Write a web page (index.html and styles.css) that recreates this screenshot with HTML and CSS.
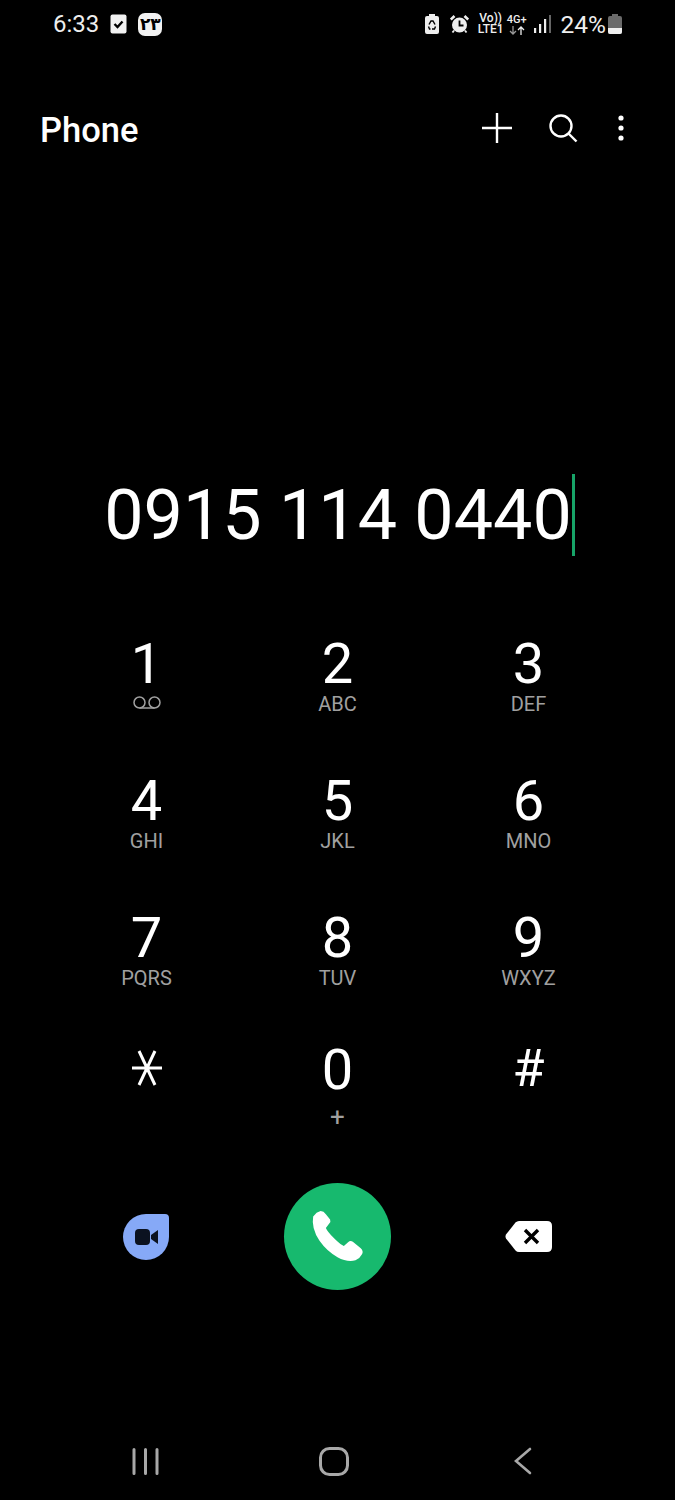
FILE: index.html
```html
<!DOCTYPE html>
<html lang="en">
<head>
  <meta charset="UTF-8" />
  <title>Phone</title>
  <link rel="stylesheet" href="styles.css">
</head>
<body>
  <div class="phone">
    <div class="status-bar">
      <div class="status-left">
        <span class="time">6:33</span>
        <svg class="icon-check" width="17" height="20" viewBox="0 0 17 20">
          <rect x="0.5" y="0.5" width="16" height="19" rx="2" fill="#f2f2f2"/>
          <path d="M4.5 10l3 3 5-5.5" fill="none" stroke="#000" stroke-width="2.4"/>
        </svg>
        <span class="date-badge">۲۳</span>
      </div>
      <div class="status-right">
        <svg width="14" height="20" viewBox="0 0 14 20">
          <path d="M4 0h6v2h2q2 0 2 2v14q0 2-2 2H2q-2 0-2-2V4q0-2 2-2h2z" fill="#eee"/>
          <path d="M4 10.500l2-3.500h2l2 3.500M10.500 12.500l-1 2.500H7M3.500 12.500l1 2.500h1" fill="none" stroke="#000" stroke-width="1.400"/>
        </svg>
        <svg class="icon-alarm" width="19" height="18" viewBox="0 0 19 18">
          <circle cx="9.500" cy="10" r="7.500" fill="#eee"/>
          <path d="M0.800 4.500L4.500 1 M14.500 1L18.200 4.500" stroke="#eee" stroke-width="2.600"/>
          <path d="M9.500 5.500V10.500H13.500" fill="none" stroke="#000" stroke-width="1.800"/>
          <path d="M4 15.500l-1.500 2M15 15.500l1.500 2" stroke="#eee" stroke-width="1.800"/>
        </svg>
        <div class="net-text volte"><span>Vo))</span><span>LTE1</span></div>
        <div class="net-text fourg">
          <span>4G+</span>
          <svg width="16" height="9" viewBox="0 0 16 9">
            <path d="M4 0v8M1 5l3 3 3-3" fill="none" stroke="#999" stroke-width="1.300"/>
            <path d="M12 9V1M9 4l3-3 3 3" fill="none" stroke="#eee" stroke-width="1.300"/>
          </svg>
        </div>
        <svg class="icon-signal" width="17" height="18" viewBox="0 0 17 18">
          <rect x="0" y="13" width="2.200" height="5" fill="#eee"/>
          <rect x="5" y="9" width="2.200" height="9" fill="#eee"/>
          <rect x="10" y="4" width="2.200" height="14" fill="#eee"/>
          <rect x="15" y="0" width="2" height="18" fill="#666"/>
        </svg>
        <span class="battery-text">24%</span>
        <svg width="14" height="20" viewBox="0 0 14 20">
          <path d="M4 0h6v2h2q2 0 2 2v14q0 2-2 2H2q-2 0-2-2V4q0-2 2-2h2z" fill="#6a6a6a"/>
          <path d="M0 14h14v4q0 2-2 2H2q-2 0-2-2z" fill="#eee"/>
        </svg>
      </div>
    </div>

    <header class="app-bar">
      <div class="app-title">Phone</div>
      <div class="app-actions">
        <svg width="32" height="32" viewBox="0 0 32 32">
          <path d="M16 1v30M1 16h30" stroke="#fff" stroke-width="2.400"/>
        </svg>
        <svg class="search-icon" width="30" height="30" viewBox="0 0 30 30">
          <circle cx="13" cy="13" r="10.500" fill="none" stroke="#fff" stroke-width="2.400"/>
          <path d="M20.500 20.500l8 8" stroke="#fff" stroke-width="2.400"/>
        </svg>
        <svg width="8" height="26" viewBox="0 0 8 26">
          <circle cx="4" cy="3" r="2.600" fill="#fff"/>
          <circle cx="4" cy="13" r="2.600" fill="#fff"/>
          <circle cx="4" cy="23" r="2.600" fill="#fff"/>
        </svg>
      </div>
    </header>

    <div class="number-display">
      <span>0915 114 0440</span><span class="caret"></span>
    </div>

    <div class="keypad">
      <div class="key"><span class="digit">1</span>
        <svg class="voicemail" width="30" height="13" viewBox="0 0 30 13">
          <circle cx="7.500" cy="6.500" r="5.500" fill="none" stroke="#a0a0a0" stroke-width="1.500"/>
          <circle cx="22.500" cy="6.500" r="5.500" fill="none" stroke="#a0a0a0" stroke-width="1.500"/>
          <path d="M7.500 12h15" stroke="#a0a0a0" stroke-width="1.500"/>
        </svg>
      </div>
      <div class="key"><span class="digit">2</span><span class="letters">ABC</span></div>
      <div class="key"><span class="digit">3</span><span class="letters">DEF</span></div>
      <div class="key"><span class="digit">4</span><span class="letters">GHI</span></div>
      <div class="key"><span class="digit">5</span><span class="letters">JKL</span></div>
      <div class="key"><span class="digit">6</span><span class="letters">MNO</span></div>
      <div class="key"><span class="digit">7</span><span class="letters">PQRS</span></div>
      <div class="key"><span class="digit">8</span><span class="letters">TUV</span></div>
      <div class="key"><span class="digit">9</span><span class="letters">WXYZ</span></div>
      <div class="key">
        <svg class="star" width="30" height="36" viewBox="0 0 30 36">
          <path d="M7 1l16 34M23 1L7 35M0 18h30" stroke="#fff" stroke-width="3"/>
        </svg>
      </div>
      <div class="key"><span class="digit">0</span><span class="letters plus">+</span></div>
      <div class="key"><span class="digit hash">#</span></div>
    </div>

    <div class="call-row">
      <svg class="video-icon" width="46" height="46" viewBox="0 0 46 46">
        <path d="M23 0H42Q46 0 46 4V23A23 23 0 1 1 23 0Z" fill="#86a9f7"/>
        <rect x="12" y="15" width="15" height="16" rx="4" fill="#0b1220"/>
        <path d="M28 21l7-5v14l-7-5z" fill="#0b1220"/>
      </svg>
      <div class="call-btn">
        <svg width="55" height="55" viewBox="-2 -2 52 52">
          <path d="M1 5Q4 1 8 0Q11 0 13 3L17 8Q18 10 16 12L13 16Q14 19 21 26Q27 32 30 33L34 29.500Q36 27.500 38.500 29L46 35Q49 38 47 41Q45 45 41 46.500Q33 48.500 24 43.500Q14 38 7 28Q-1 16 1 5Z" fill="#fff"/>
        </svg>
      </div>
      <svg width="47" height="31" viewBox="0 0 47 31">
        <path d="M14 0H42Q47 0 47 5V26Q47 31 42 31H14Q12 31 10.500 29.500L1 17.500Q0 15.500 1 13.500L10.500 1.500Q12 0 14 0Z" fill="#fff"/>
        <path d="M20 9l13 13M33 9L20 22" stroke="#000" stroke-width="3.400"/>
      </svg>
    </div>

    <nav class="nav-bar">
      <svg width="28" height="27" viewBox="0 0 28 27">
        <path d="M2 1.500v24M13.500 1.500v24M25 1.500v24" stroke="#a8a8a8" stroke-width="3" stroke-linecap="round"/>
      </svg>
      <svg class="nav-home" width="30" height="29" viewBox="0 0 30 29">
        <rect x="1.500" y="1.500" width="27" height="26" rx="9" fill="none" stroke="#a8a8a8" stroke-width="3"/>
      </svg>
      <svg width="18" height="28" viewBox="0 0 18 28">
        <path d="M16 2L2 14l14 12" fill="none" stroke="#a8a8a8" stroke-width="2.600" stroke-linecap="round"/>
      </svg>
    </nav>
  </div>
</body>
</html>
```

FILE: styles.css
```css
body {
  margin: 0;
  background-color: #000;
  font-family: Roboto, 'Noto Sans', sans-serif;
  color: #fff;
}

.phone {
  width: 675px;
  height: 1500px;
  overflow: hidden;
}

.status-bar {
  display: flex;
  justify-content: space-between;
  align-items: center;
  height: 28px;
  padding: 10px 53px 0 53px;
}
.status-left {
  display: flex;
  align-items: center;
  gap: 11px;
}
.time {
  font-size: 24px;
  color: #eee;
}
.date-badge {
  width: 24px;
  height: 23px;
  line-height: 23px;
  border-radius: 7px;
  background-color: #f2f2f2;
  color: #000;
  font-family: 'DejaVu Sans', sans-serif;
  font-size: 17px;
  font-weight: bold;
  text-align: center;
}
.status-right {
  display: flex;
  align-items: center;
  gap: 8px;
}
.icon-alarm {
  margin: 0 1px 0 3px;
}
.net-text {
  display: flex;
  flex-direction: column;
  align-items: center;
  font-size: 12px;
  line-height: 11px;
  font-weight: 500;
  color: #eee;
}
.fourg {
  font-size: 11px;
  margin: 0 -1px 0 -5px;
}
.fourg svg {
  display: block;
  margin-top: 1px;
}
.battery-text {
  font-size: 24.5px;
  color: #eee;
  margin: 0 -6px 0 2px;
}

.app-bar {
  display: flex;
  justify-content: space-between;
  align-items: center;
  margin-top: 66px;
  height: 48px;
  padding: 0 50px 0 40px;
}
.app-title {
  font-size: 34.5px;
  font-weight: 500;
  margin-top: 4px;
}
.app-actions {
  display: flex;
  align-items: center;
  gap: 35px;
}
.search-icon {
  margin-right: 4px;
}

.number-display {
  display: flex;
  justify-content: center;
  align-items: center;
  margin-top: 322px;
  height: 82px;
  padding-left: 4px;
  font-size: 70px;
  font-weight: 400;
}
.caret {
  width: 3px;
  height: 82px;
  background-color: #17a468;
}

.keypad {
  display: grid;
  grid-template-columns: repeat(3, 191px);
  grid-template-rows: 137px 137px 132px 100px;
  padding: 0 0 0 51px;
  margin-top: 75px;
}
.key {
  display: flex;
  flex-direction: column;
  align-items: center;
  padding-top: 4px;
}
.digit {
  font-size: 56px;
  line-height: 59px;
}
.letters {
  font-size: 20px;
  line-height: 20px;
  color: #a0a0a0;
}
.plus {
  margin-top: 5px;
  line-height: 24px;
  font-size: 26px;
}
.voicemail {
  margin-top: 2px;
}
.star {
  margin-top: 9px;
}
.hash {
  font-size: 52px;
  margin-top: -2px;
}

.call-row {
  display: grid;
  grid-template-columns: repeat(3, 191px);
  justify-items: center;
  align-items: center;
  height: 107px;
  padding-left: 51px;
  margin-top: 46px;
}
.video-icon {
  margin-left: -2px;
}
.call-btn {
  display: flex;
  justify-content: center;
  align-items: center;
  width: 107px;
  height: 107px;
  border-radius: 50%;
  background-color: #17b96e;
}

.nav-bar {
  display: flex;
  align-items: center;
  margin-top: 156px;
  height: 30px;
  padding-left: 132px;
}
.nav-home {
  margin: 0 165px 0 159px;
}
```
